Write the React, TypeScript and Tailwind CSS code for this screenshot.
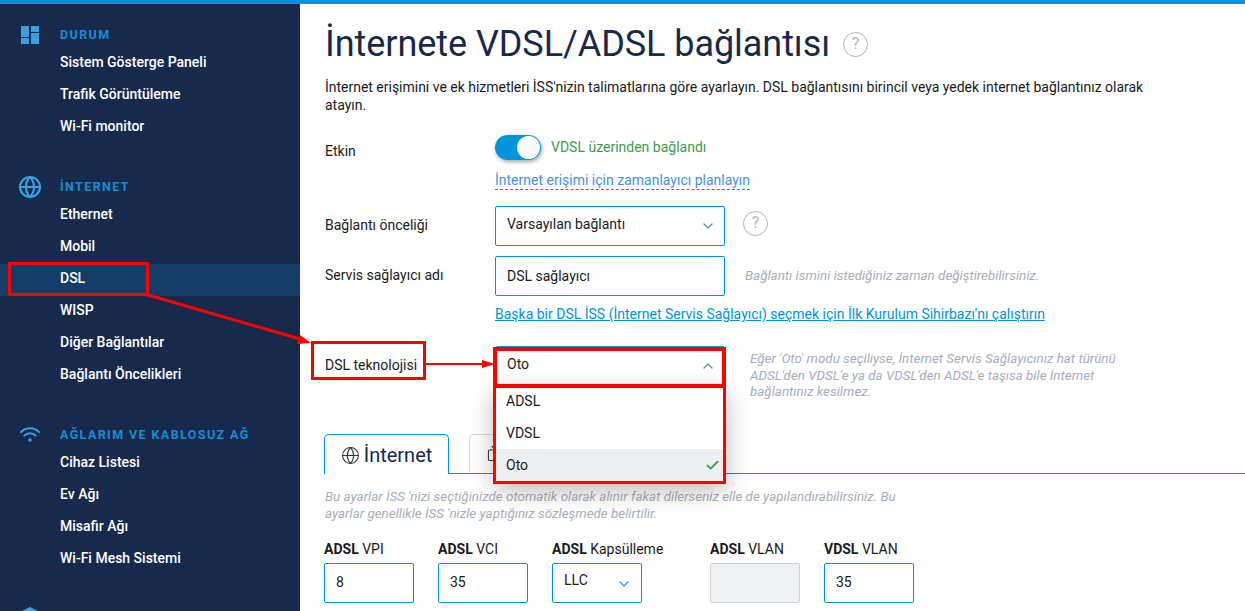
import { ChevronDown, ChevronUp, Check, Globe, Tv } from "lucide-react";

const groups = [
  { title: "DURUM", icon: "dash", items: ["Sistem Gösterge Paneli", "Trafik Görüntüleme", "Wi-Fi monitor"] },
  { title: "İNTERNET", icon: "globe", items: ["Ethernet", "Mobil", "DSL", "WISP", "Diğer Bağlantılar", "Bağlantı Öncelikleri"] },
  { title: "AĞLARIM VE KABLOSUZ AĞ", icon: "wifi", items: ["Cihaz Listesi", "Ev Ağı", "Misafir Ağı", "Wi-Fi Mesh Sistemi"] },
];

const GroupIcon = ({ name }: { name: string }) => {
  if (name === "dash") {
    return (
      <svg width="18" height="18" viewBox="0 0 18 18" fill="#3a9fdd">
        <rect x="0" y="0" width="8" height="11" />
        <rect x="10" y="0" width="8" height="6" />
        <rect x="0" y="12" width="8" height="6" />
        <rect x="10" y="7" width="8" height="11" />
      </svg>
    );
  }
  if (name === "globe") {
    return <Globe size={24} color="#3a9fdd" strokeWidth={2.2} className="-ml-[3px]" />;
  }
  return (
    <svg width="20" height="16" viewBox="0 0 20 16" fill="none" stroke="#3a9fdd" strokeWidth="2" strokeLinecap="round" className="-ml-px">
      <path d="M1 5 C6 0 14 0 19 5" />
      <path d="M4.5 8.5 C7.5 5.5 12.5 5.5 15.5 8.5" />
      <circle cx="10" cy="13" r="1.8" fill="#3a9fdd" stroke="none" />
    </svg>
  );
};

const Help = () => (
  <div className="flex h-[25px] w-[25px] items-center justify-center rounded-full border-[1.5px] border-[#b4b4b4] text-[16px] text-[#b4b4b4]">
    ?
  </div>
);

const fields = [
  { bold: "ADSL", rest: "VPI", value: "8", ml: "ml-0" },
  { bold: "ADSL", rest: "VCI", value: "35", ml: "ml-[24px]" },
];

const App = () => {
  return (
    <div className="relative h-[611px] w-[1245px] overflow-hidden bg-white font-['Roboto',sans-serif] text-[14px] text-[#1a1a1a]">
      <div className="h-1 bg-[#0095da]" />
      <div className="flex h-[607px]">
        <aside className="w-[300px] shrink-0 bg-[#182a4b] pt-[19px]">
          {groups.map((group) => (
            <div key={group.title} className="mb-[31px]">
              <div className="flex h-6 items-center pl-[21px]">
                <div className="flex w-[39px] justify-start">
                  <GroupIcon name={group.icon} />
                </div>
                <span className="text-[12.5px] font-bold tracking-[1.4px] text-[#0f8fd6]">{group.title}</span>
              </div>
              <div className="mt-[1px]">
                {group.items.map((item) => (
                  <div
                    key={item}
                    className={`flex h-8 items-center pb-1 pl-[60px] text-[14px] font-medium text-white ${item === "DSL" ? "bg-[#143e68]" : ""}`}
                  >
                    {item}
                  </div>
                ))}
              </div>
            </div>
          ))}
          <svg width="20" height="8" viewBox="0 0 20 8" className="ml-5" fill="#3a9fdd">
            <path d="M10 0 L20 5 L20 8 L0 8 L0 5 Z" />
          </svg>
        </aside>

        <main className="flex-1 pl-[25px] pt-5">
          <div className="flex h-10 items-center">
            <h1 className="text-[36px] leading-10 tracking-[-0.06px] text-[#182a4b]">İnternete VDSL/ADSL bağlantısı</h1>
            <div className="ml-[13px]">
              <Help />
            </div>
          </div>
          <p className="mt-[14px] w-[825px] text-[14px] leading-[18px] tracking-[-0.015px]">
            İnternet erişimini ve ek hizmetleri İSS'nizin talimatlarına göre ayarlayın. DSL bağlantısını birincil veya yedek internet bağlantınız olarak atayın.
          </p>

          <div className="mt-[21px] flex">
            <div className="w-[170px] pt-[6px]">Etkin</div>
            <div className="flex h-[25px] w-[46px] items-center justify-end rounded-full bg-[#0095da] pr-[1px] shadow-[1px_2px_4px_rgba(0,0,0,0.35)]">
              <div className="h-[23px] w-[23px] rounded-full bg-white" />
            </div>
            <span className="ml-[10px] leading-[24px] text-[#3f9c4b]">VDSL üzerinden bağlandı</span>
          </div>
          <div className="ml-[170px] mt-[9px] w-fit border-b border-dashed border-[#0095da] text-[14px] leading-[18px] text-[#4a90d9]">
            İnternet erişimi için zamanlayıcı planlayın
          </div>

          <div className="mt-[16px] flex items-center">
            <div className="w-[170px] pb-[2px]">Bağlantı önceliği</div>
            <div className="flex h-10 w-[230px] items-center justify-between rounded-[2px] border border-[#0095da] pb-[3px] pl-[11px] pr-[8px]">
              <span>Varsayılan bağlantı</span>
              <ChevronDown size={16} color="#5b8fc4" className="mt-[3px]" />
            </div>
            <div className="-mt-[6px] ml-[18px]">
              <Help />
            </div>
          </div>

          <div className="mt-[10px] flex items-center">
            <div className="w-[170px] pb-[2px]">Servis sağlayıcı adı</div>
            <div className="flex h-10 w-[230px] items-center rounded-[2px] border border-[#0095da] pl-[11px]">DSL sağlayıcı</div>
            <span className="ml-[20px] text-[13.4px] italic text-[#a9aeb9]">Bağlantı ismini istediğiniz zaman değiştirebilirsiniz.</span>
          </div>

          <div className="ml-[170px] mt-[9px] text-[14px] leading-[18px] text-[#0095da] underline">
            Başka bir DSL İSS (İnternet Servis Sağlayıcı) seçmek için İlk Kurulum Sihirbazı'nı çalıştırın
          </div>

          <div className="mt-[23px] flex">
            <div className="w-[170px] pt-[9px]">DSL teknolojisi</div>
            <div className="flex h-10 w-[230px] items-center justify-between rounded-[2px] border border-[#0095da] pb-[3px] pl-[11px] pr-[8px]">
              <span>Oto</span>
              <ChevronUp size={16} color="#5b8fc4" className="mt-[3px]" />
            </div>
            <p className="ml-[25px] mt-[5px] w-[375px] text-[13.4px] italic leading-[16.5px] text-[#a9aeb9]">
              Eğer 'Oto' modu seçiliyse, İnternet Servis Sağlayıcınız hat türünü ADSL'den VDSL'e ya da VDSL'den ADSL'e taşısa bile İnternet bağlantınız kesilmez.
            </p>
          </div>

          <div className="mt-[33px] flex h-10 border-b border-[#0095da] -ml-px">
            <div className="flex h-10 w-[125px] items-center justify-center gap-[4px] rounded-t-[5px] border border-b-0 border-[#0095da] bg-white pt-[2px] text-[20px] text-[#182a4b]">
              <Globe size={19} color="#333" strokeWidth={1.3} />
              <span>İnternet</span>
            </div>
            <div className="ml-5 flex h-[39px] w-[200px] items-center rounded-t-[5px] border border-b-0 border-[#d5d9de] pl-[17px]">
              <Tv size={17} color="#333" strokeWidth={1.5} />
            </div>
          </div>

          <p className="mt-[14px] w-[585px] text-[13.4px] italic leading-[17px] text-[#a9aeb9]">
            Bu ayarlar İSS 'nizi seçtiğinizde otomatik olarak alınır fakat dilerseniz elle de yapılandırabilirsiniz. Bu ayarlar genellikle İSS 'nizle yaptığınız sözleşmede belirtilir.
          </p>

          <div className="mt-[18px] flex -ml-px">
            {fields.map((f) => (
              <div key={f.rest} className={`w-[90px] ${f.ml}`}>
                <div className="h-[23px] leading-[18px]">
                  <b>{f.bold}</b> {f.rest}
                </div>
                <div className="flex h-10 items-center rounded-[2px] border border-[#0095da] pl-[11px]">{f.value}</div>
              </div>
            ))}
            <div className="ml-[24px] w-[90px]">
              <div className="h-[23px] whitespace-nowrap leading-[18px]">
                <b>ADSL</b> Kapsülleme
              </div>
              <div className="flex h-10 items-center justify-between rounded-[2px] border border-[#0095da] pb-[5px] pl-[11px] pr-[9px]">
                <span>LLC</span>
                <ChevronDown size={16} color="#5b8fc4" className="mt-[7px]" />
              </div>
            </div>
            <div className="ml-[68px] w-[90px]">
              <div className="h-[23px] leading-[18px]">
                <b>ADSL</b> VLAN
              </div>
              <div className="h-10 rounded-[2px] border border-[#cfd3d6] bg-[#f0f1f2]" />
            </div>
            <div className="ml-[24px] w-[90px]">
              <div className="h-[23px] leading-[18px]">
                <b>VDSL</b> VLAN
              </div>
              <div className="flex h-10 items-center rounded-[2px] border border-[#0095da] pl-[11px]">35</div>
            </div>
          </div>
        </main>
      </div>

      {/* open dropdown */}
      <div className="absolute left-[495px] top-[385px] w-[230px] bg-white shadow-[0_8px_24px_rgba(0,0,0,0.3)]">
        <div className="flex h-8 items-center pl-[11px]">ADSL</div>
        <div className="flex h-8 items-center pl-[11px]">VDSL</div>
        <div className="flex h-8 items-center justify-between bg-[#eeeff1] pl-[11px] pr-[5px]">
          <span>Oto</span>
          <Check size={15} color="#3f9c5f" strokeWidth={3} />
        </div>
      </div>

      {/* red annotations */}
      <div className="absolute left-[8px] top-[262px] h-[34px] w-[141px] border-[3px] border-[#ff0000]" />
      <div className="absolute left-[311px] top-[341px] h-[39px] w-[115px] border-[3px] border-[#ff0000]" />
      <div className="absolute left-[493px] top-[347px] h-[41px] w-[233px] border-[4px] border-[#ff0000]" />
      <div className="absolute left-[493px] top-[387px] h-[97px] w-[233px] border-[3px] border-t-0 border-[#ff0000]" />
      <svg className="absolute left-0 top-0" width="1245" height="611" fill="#ff0000" stroke="none">
        <path d="M148 295 L300 339" stroke="#ff0000" strokeWidth="3" fill="none" />
        <polygon points="311,343 297,344 300,335" />
        <path d="M426 364 L485 364" stroke="#ff0000" strokeWidth="2" fill="none" />
        <polygon points="495,364 482,360 482,368" />
      </svg>
    </div>
  );
};

export default App;
